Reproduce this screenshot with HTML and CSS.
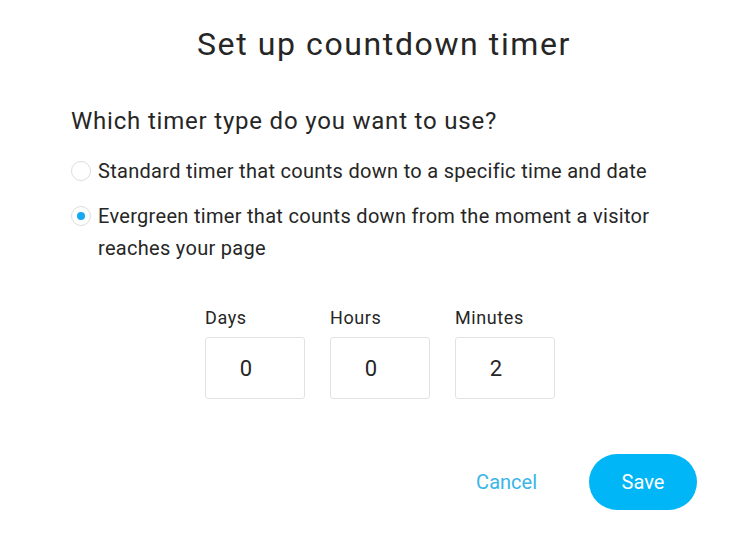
FILE: index.html
```html
<!DOCTYPE html>
<html lang="en">
<head>
    <meta charset="UTF-8">
    <meta name="viewport" content="width=device-width, initial-scale=1.0">
    <title>Set up countdown timer</title>
    <link rel="stylesheet" href="styles.css">
</head>
<body>
<div class="dialog">
    <h1>Set up countdown timer</h1>
    <h2>Which timer type do you want to use?</h2>

    <div class="options">
        <label class="option">
            <span class="radio"></span>
            <span>Standard timer that counts down to a specific time and date</span>
        </label>
        <label class="option">
            <span class="radio checked"></span>
            <span>Evergreen timer that counts down from the moment a visitor reaches your page</span>
        </label>
    </div>

    <div class="fields">
        <div class="field">
            <div class="field-label">Days</div>
            <div class="field-box">0</div>
        </div>
        <div class="field">
            <div class="field-label">Hours</div>
            <div class="field-box">0</div>
        </div>
        <div class="field">
            <div class="field-label">Minutes</div>
            <div class="field-box">2</div>
        </div>
    </div>

    <div class="actions">
        <button type="button" class="cancel">Cancel</button>
        <button type="button" class="save">Save</button>
    </div>
</div>
</body>
</html>
```

FILE: styles.css
```css
body {
    margin: 0;
    padding: 0;
    background-color: #fff;
    font-family: Roboto, "Liberation Sans", sans-serif;
    color: #262626;
}

.dialog {
    width: 754px;
    height: 543px;
    box-sizing: border-box;
    padding: 24px 57px 0 71px;
}

h1 {
    margin: 0;
    text-align: center;
    font-size: 32px;
    font-weight: 400;
    letter-spacing: 1.6px;
    line-height: 40px;
}

h2 {
    margin: 42px 0 0 0;
    font-size: 24px;
    font-weight: 400;
    letter-spacing: 0.8px;
    line-height: 30px;
}

.options {
    margin-top: 19px;
    display: flex;
    flex-direction: column;
    gap: 13px;
}

.option {
    display: flex;
    align-items: flex-start;
    gap: 7px;
    font-size: 20px;
    line-height: 32px;
    letter-spacing: 0.3px;
}

.radio {
    flex: none;
    width: 18px;
    height: 18px;
    margin-top: 6px;
    border: 1px solid #ddd;
    border-radius: 50%;
    position: relative;
}

.radio.checked::after {
    content: "";
    position: absolute;
    top: 5px;
    left: 5px;
    width: 8px;
    height: 8px;
    border-radius: 50%;
    background-color: #18a8f2;
}

.fields {
    margin-top: 42px;
    display: flex;
    justify-content: center;
    gap: 25px;
    padding-right: 8px;
}

.field-label {
    font-size: 18px;
    line-height: 24px;
    letter-spacing: 0.6px;
}

.field-box {
    margin-top: 7px;
    width: 80px;
    height: 60px;
    padding-right: 18px;
    border: 1px solid #e2e2e2;
    border-radius: 3px;
    display: flex;
    align-items: center;
    justify-content: center;
    font-size: 22px;
}

.actions {
    margin-top: 55px;
    display: flex;
    justify-content: flex-end;
    align-items: center;
    gap: 52px;
}

button {
    font-family: Roboto, "Liberation Sans", sans-serif;
    font-size: 20px;
    border: none;
    cursor: pointer;
    background: none;
}

.cancel {
    color: #3ab5e8;
    padding: 0;
}

.save {
    background-color: #00b6f6;
    color: #fff;
    width: 108px;
    height: 56px;
    border-radius: 28px;
}
```
